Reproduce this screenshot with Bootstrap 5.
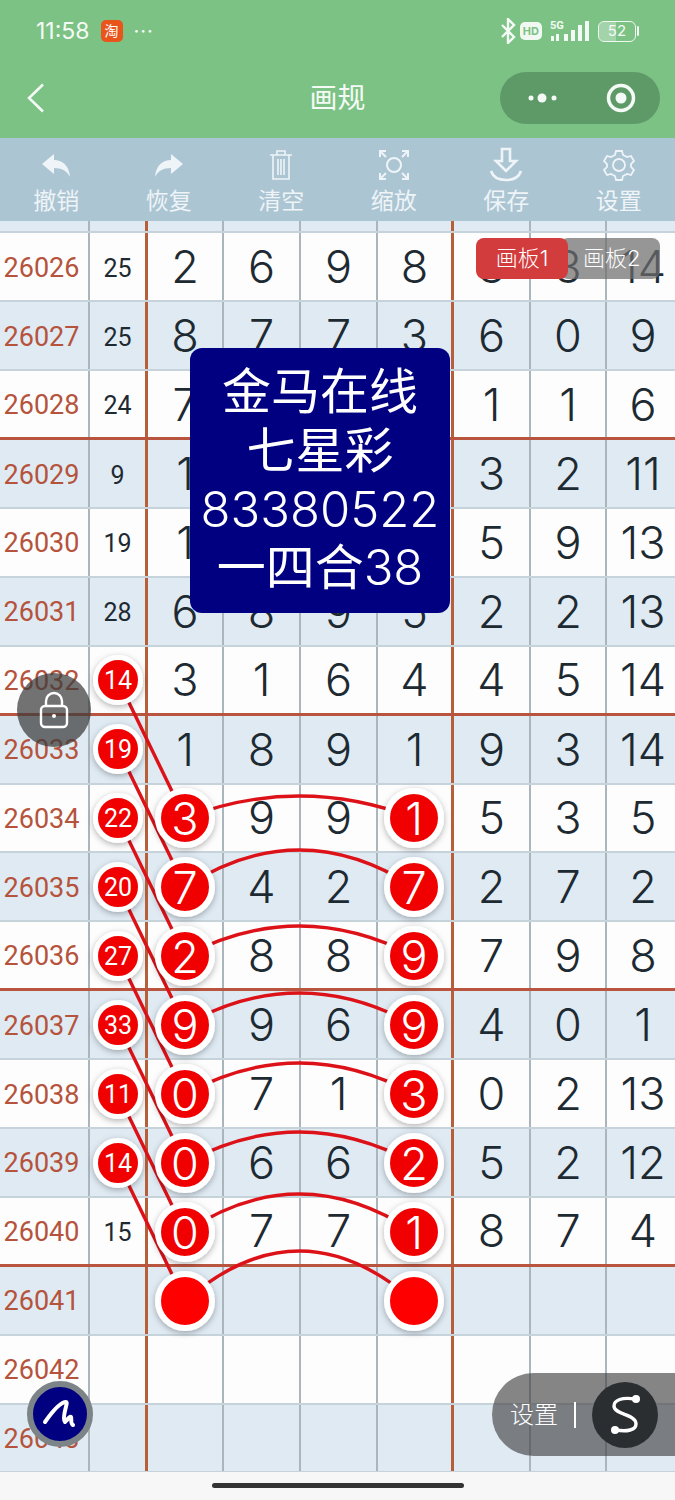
<!DOCTYPE html>
<html lang="zh-CN">
  <head>
    <meta charset="UTF-8" />
    <meta name="viewport" content="width=device-width, initial-scale=1.0" />
    <title>画规</title>
    <link rel="stylesheet" href="https://cdn.jsdelivr.net/npm/bootstrap@5.3.6/dist/css/bootstrap.min.css" />
    <style>
      body {
        width: 675px;
        height: 1500px;
        overflow: hidden;
        background: #f7f7f7;
        font-family: Inter, "Noto Sans CJK SC", sans-serif;
      }
      .head-band { height: 138px; background: #7cc284; color: #f4faf5; }
      .status-bar { height: 62px; padding: 0 35px 0 36px; font-size: 23px; }
      .tao-icon { width: 22px; height: 22px; border-radius: 5px; background: #e8541a; font-size: 14px; line-height: 22px; text-align: center; margin-left: 11px; }
      .status-dots { font-size: 20px; letter-spacing: 1px; margin-left: 11px; line-height: 1; }
      .hd-tag { background: #f1f8f2; color: #7cc284; border-radius: 5px; font-size: 11px; font-weight: 700; padding: 2px 3px; line-height: 14px; }
      .batt-box { width: 38px; height: 21px; border: 1.5px solid #f1f8f2; border-radius: 6px; font-size: 15px; line-height: 18px; text-align: center; position: relative; overflow: hidden; }
      .batt-fill { width: 46%; background: rgba(255,255,255,.3); }
      .nav-strip { height: 72px; }
      .nav-title { font-size: 28px; font-weight: 400; line-height: 1; }
      .capsule { width: 160px; height: 52px; background: #5e9a68; margin-right: 15px; padding: 0 24px 0 27px; }
      .tool-band { height: 83px; background: #acc5d3; color: #eef4f7; font-size: 23px; font-weight: 400; padding-top: 8px; }
      .tool-icon { height: 37px; }
      .tool-label { line-height: 1; margin-top: 7px; }
      .sheet { position: relative; height: 1251px; overflow: hidden; }
      .sheet-row { display: grid; grid-template-columns: 90px 58px 76px 77px 77px 76px 77px 76px 68px; height: 68.9px; box-sizing: border-box; border-bottom: 2px solid #c7d3da; background: #fdfdfd; }
      .sheet-row.row-blue { background: #dfeaf3; }
      .sheet-row.row-stub { height: 12.4px; }
      .sheet-row.row-mark { border-bottom: 3px solid #b9553f; }
      .sheet-cell { display: flex; align-items: center; justify-content: center; border-right: 2px solid #aab6bc; font-size: 45px; font-weight: 300; color: #1e2a32; line-height: 1; }
      .sheet-cell:last-child { border-right: 0; padding-left: 4px; }
      .sheet-cell.cell-issue { font-family: Roboto, sans-serif; font-size: 27px; font-weight: 400; color: #b5533c; padding: 3px 5px 0 0; }
      .sheet-cell.cell-sum { font-family: Roboto, sans-serif; font-size: 25px; font-weight: 400; padding-top: 3px; }
      .sheet-cell.cell-edge { border-right: 3px solid #b5603a; }
      .draw-layer { position: absolute; left: 0; top: 0; width: 675px; height: 1251px; }
      .ball-text { font-family: Inter, sans-serif; font-weight: 300; fill: #fff; text-anchor: middle; dominant-baseline: central; }
      .ball-small { font-family: Roboto, sans-serif; font-weight: 400; font-size: 25px; }
      .ball-big { font-size: 45px; }
      .board-tabs { position: absolute; left: 476px; top: 17px; width: 184px; height: 41px; color: #fff; font-size: 22px; font-weight: 300; }
      .board-two { position: absolute; left: 84px; top: 0; width: 100px; height: 41px; background: rgba(110,110,110,.72); border-radius: 8px; padding-left: 23px; line-height: 41px; }
      .board-one { position: absolute; left: 0; top: 0; width: 92px; height: 41px; background: #d23c3c; border-radius: 8px; line-height: 41px; text-align: center; }
      .promo-box { position: absolute; left: 190px; top: 127px; width: 260px; height: 265px; background: #000080; border-radius: 12px; color: #fff; font-size: 49px; font-weight: 400; line-height: 58.7px; }
      .promo-num { font-weight: 300; }
      .lock-btn { position: absolute; left: 17px; top: 452px; width: 74px; height: 74px; background: rgba(60,60,60,.72); }
      .pen-btn { position: absolute; left: 27px; top: 1160px; width: 66px; height: 66px; background: #000080; border: 6px solid #7d8488; }
      .side-pill { position: absolute; left: 492px; top: 1152px; width: 183px; height: 83px; background: rgba(60,60,60,.62); border-radius: 42px 0 0 42px; color: #fff; font-size: 24px; font-weight: 300; padding-left: 18px; }
      .pill-sep { width: 2px; height: 26px; background: #fff; margin: 0 16px; }
      .pill-round { width: 66px; height: 66px; background: #2b2e31; }
      .home-band { height: 28px; }
      .home-bar { width: 252px; height: 5px; background: #333; margin-top: 11px; }
    </style>
  </head>
  <body>
    <div class="head-band">
      <div class="status-bar d-flex align-items-center">
        <span>11:58</span>
        <span class="tao-icon text-white">淘</span>
        <span class="status-dots">···</span>
        <div class="ms-auto d-flex align-items-center gap-1">
          <svg width="16" height="26" viewBox="0 0 16 26" fill="none" stroke="#f4faf5" stroke-width="2.4"><path d="M2 7l12 12-6 6V1l6 6-12 12" /></svg>
          <span class="hd-tag">HD</span>
          <svg class="ms-1" width="40" height="24" viewBox="3 0 40 24" fill="#f4faf5">
            <text x="3" y="10" font-size="11" font-weight="700" font-family="Roboto, sans-serif">5G</text>
            <rect x="4" y="17" width="3" height="5" /><rect x="9" y="15" width="3" height="7" />
            <rect x="17" y="15" width="4" height="7" /><rect x="24" y="11" width="4" height="11" /><rect x="31" y="6" width="4" height="16" /><rect x="38" y="2" width="4" height="20" />
          </svg>
          <div class="d-flex align-items-center ms-1">
            <div class="batt-box"><div class="batt-fill position-absolute top-0 bottom-0 start-0"></div><span class="position-relative">52</span></div>
            <svg width="4" height="10" viewBox="0 0 4 10"><rect x="1" y="0" width="2" height="10" rx="1" fill="#f1f8f2" /></svg>
          </div>
        </div>
      </div>
      <div class="nav-strip row g-0 align-items-center">
        <div class="col-4 ps-4">
          <svg width="24" height="30" viewBox="0 0 24 30" fill="none" stroke="#f4faf5" stroke-width="2.6"><path d="M19 1.5L5 15l14 13.5" /></svg>
        </div>
        <div class="col-4 text-center nav-title">画规</div>
        <div class="col-4 d-flex justify-content-end">
          <div class="capsule rounded-pill d-flex align-items-center justify-content-between">
            <svg width="32" height="10" viewBox="0 0 32 10" fill="#f4faf5"><circle cx="4" cy="5" r="2.5" /><circle cx="15" cy="5" r="4.5" /><circle cx="27" cy="5" r="2.5" /></svg>
            <svg width="30" height="30" viewBox="0 0 30 30"><circle cx="15" cy="15" r="12.5" fill="none" stroke="#f4faf5" stroke-width="3.5" /><circle cx="15" cy="15" r="5.5" fill="#f4faf5" /></svg>
          </div>
        </div>
      </div>
    </div>

    <div class="tool-band row g-0 text-center">
      <div class="col-2">
        <div class="tool-icon"><svg width="30" height="32" viewBox="0 0 30 32" fill="#eef4f7"><path d="M1 15L13 5v6c8 0 15 5 16 17-3-6-8-9-16-9v6z" /></svg></div>
        <div class="tool-label">撤销</div>
      </div>
      <div class="col-2">
        <div class="tool-icon"><svg width="30" height="32" viewBox="0 0 30 32" fill="#eef4f7"><path d="M29 15L17 5v6C9 11 2 16 1 28c3-6 8-9 16-9v6z" /></svg></div>
        <div class="tool-label">恢复</div>
      </div>
      <div class="col-2">
        <div class="tool-icon"><svg width="28" height="34" viewBox="0 0 28 34" fill="none" stroke="#eef4f7" stroke-width="1.6"><path d="M3 7h22M10 7V3h8v4M6 7v24h16V7M11 11v16M14 11v16M17 11v16" /></svg></div>
        <div class="tool-label">清空</div>
      </div>
      <div class="col-2">
        <div class="tool-icon"><svg width="32" height="34" viewBox="0 0 32 34" fill="none" stroke="#eef4f7" stroke-width="2"><circle cx="16" cy="17" r="7" /><path d="M2 9V3h6M2 3l6 6M30 9V3h-6M30 3l-6 6M2 25v6h6M2 31l6-6M30 25v6h-6M30 31l-6-6" /></svg></div>
        <div class="tool-label">缩放</div>
      </div>
      <div class="col-2">
        <div class="tool-icon"><svg width="36" height="36" viewBox="0 0 36 36" fill="none" stroke="#eef4f7" stroke-width="2.6"><path d="M14 2h8v12h6L18 24 8 14h6zM3 24c2 6 8 9 15 9s13-3 15-9" /></svg></div>
        <div class="tool-label">保存</div>
      </div>
      <div class="col-2">
        <div class="tool-icon"><svg width="32" height="34" viewBox="0 0 32 34" fill="none" stroke="#eef4f7" stroke-width="1.8"><circle cx="16" cy="17" r="6" /><path d="M13 3h6l1 4 4 2 4-1 3 5-3 3v3l3 3-3 5-4-1-4 2-1 4h-6l-1-4-4-2-4 1-3-5 3-3v-3L1 13l3-5 4 1 4-2z" /></svg></div>
        <div class="tool-label">设置</div>
      </div>
    </div>

    <div class="sheet" id="sheet">
      <div id="sheetRows"></div>
      <svg class="draw-layer" id="drawLayer" viewBox="0 221 675 1251"></svg>
      <div class="board-tabs">
        <div class="board-two">画板2</div>
        <div class="board-one">画板1</div>
      </div>
      <div class="promo-box d-flex flex-column align-items-center justify-content-center">
        <div>金马在线</div>
        <div>七星彩</div>
        <div class="promo-num">83380522</div>
        <div>一四合<span class="promo-num">38</span></div>
      </div>
      <div class="lock-btn rounded-circle d-flex align-items-center justify-content-center">
        <svg width="32" height="38" viewBox="0 0 32 38" fill="none" stroke="#fff" stroke-width="2.4"><rect x="3" y="15" width="26" height="21" rx="4" /><path d="M8 15V10a8 8 0 0 1 16 0v5" /><circle cx="16" cy="25" r="2" fill="#fff" stroke="none" /></svg>
      </div>
      <div class="pen-btn rounded-circle d-flex align-items-center justify-content-center">
        <svg width="36" height="36" viewBox="0 0 36 36" fill="none" stroke="#fff" stroke-width="4" stroke-linecap="round" stroke-linejoin="round"><path d="M3 26C10 16 18 6 24 6c3 0-5 15-1 20 2-2 5-6 6-5s-1 7 2 8" /></svg>
      </div>
      <div class="side-pill d-flex align-items-center">
        <span>设置</span>
        <span class="pill-sep"></span>
        <div class="pill-round rounded-circle d-flex align-items-center justify-content-center">
          <svg width="34" height="42" viewBox="0 0 34 42" fill="none" stroke="#fff" stroke-width="3.4"><path d="M27 5C14 3 6 6 6 12c0 9 22 8 22 18 0 6-9 8-20 6" /><circle cx="28" cy="5" r="4" fill="#fff" stroke="none" /><circle cx="7" cy="36" r="4" fill="#fff" stroke="none" /></svg>
        </div>
      </div>
    </div>

    <div class="home-band d-flex justify-content-center">
      <div class="home-bar rounded-pill"></div>
    </div>

    <script>
      const rows = [
        [26026, 25, 2, 6, 9, 8, 8, 3, 14],
        [26027, 25, 8, 7, 7, 3, 6, 0, 9],
        [26028, 24, 7, 5, 2, 6, 1, 1, 6],
        [26029, 9, 1, 3, 4, 1, 3, 2, 11],
        [26030, 19, 1, 6, 7, 5, 5, 9, 13],
        [26031, 28, 6, 8, 9, 5, 2, 2, 13],
        [26032, 14, 3, 1, 6, 4, 4, 5, 14],
        [26033, 19, 1, 8, 9, 1, 9, 3, 14],
        [26034, 22, 3, 9, 9, 1, 5, 3, 5],
        [26035, 20, 7, 4, 2, 7, 2, 7, 2],
        [26036, 27, 2, 8, 8, 9, 7, 9, 8],
        [26037, 33, 9, 9, 6, 9, 4, 0, 1],
        [26038, 11, 0, 7, 1, 3, 0, 2, 13],
        [26039, 14, 0, 6, 6, 2, 5, 2, 12],
        [26040, 15, 0, 7, 7, 1, 8, 7, 4],
        [26041],
        [26042],
        [26043],
      ];

      function cellsHtml(values) {
        let html = "";
        for (let i = 0; i < 9; i++) {
          let cls = "sheet-cell";
          if (i === 0) cls += " cell-issue";
          if (i === 1) cls += " cell-sum cell-edge";
          if (i === 5) cls += " cell-edge";
          html += `<div class="${cls}">${values[i] === undefined ? "" : values[i]}</div>`;
        }
        return html;
      }

      let rowsHtml = `<div class="sheet-row row-blue row-stub">${cellsHtml([])}</div>`;
      rows.forEach((r) => {
        const blue = r[0] % 2 === 1 ? " row-blue" : "";
        const mark = (r[0] - 26028) % 4 === 0 ? " row-mark" : "";
        rowsHtml += `<div class="sheet-row${blue}${mark}">${cellsHtml(r)}</div>`;
      });
      document.getElementById("sheetRows").innerHTML = rowsHtml;

      // balls: y of each drawn row, sum value, left and right digit, arc top
      const picks = [
        [680, 14, 818, 3, 1, 796],
        [749, 19, 887, 7, 7, 850],
        [818, 22, 956, 2, 9, 926],
        [887, 20, 1025, 9, 9, 993],
        [956, 27, 1094, 0, 3, 1063],
        [1025, 33, 1163, 0, 2, 1132],
        [1094, 11, 1232, 0, 1, 1194],
        [1163, 14, 1301, "", "", 1251],
      ];

      function ball(x, y, big, label, fill) {
        const r = big ? 27 : 22.5;
        const w = big ? 6 : 5;
        const cls = big ? "ball-big" : "ball-small";
        return `<circle cx="${x}" cy="${y}" r="${r}" fill="${fill}" stroke="#fff" stroke-width="${w}" filter="url(#ballShadow)" />` +
          `<text class="ball-text ${cls}" x="${x}" y="${y}">${label}</text>`;
      }

      let lines = "";
      let balls = "";
      picks.forEach((p) => {
        const [sumY, sum, y, left, right, top] = p;
        const fill = left === "" ? "#ff0000" : "#f00606";
        lines += `<path d="M118 ${sumY}L185 ${y}" />`;
        lines += `<path d="M185 ${y}Q299 ${2 * top - y} 414 ${y}" />`;
        balls += ball(118, sumY, false, sum, "#f00606");
        balls += ball(185, y, true, left, fill);
        balls += ball(414, y, true, right, fill);
      });

      document.getElementById("drawLayer").innerHTML =
        `<defs><filter id="ballShadow" x="-30%" y="-30%" width="160%" height="160%"><feDropShadow dx="0" dy="2" stdDeviation="3" flood-color="#000" flood-opacity=".3" /></filter></defs>` +
        `<g fill="none" stroke="#dc1218" stroke-width="3.4">${lines}</g>${balls}`;
    </script>
    <script src="https://cdn.jsdelivr.net/npm/bootstrap@5.3.6/dist/js/bootstrap.bundle.min.js"></script>
  </body>
</html>
